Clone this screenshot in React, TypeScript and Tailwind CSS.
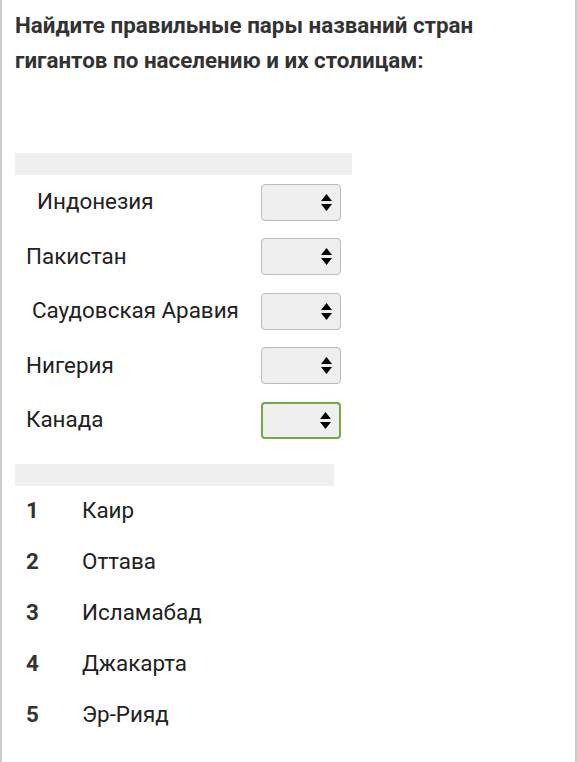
import React from "react";

const countries = [
  { name: "Индонезия", indent: "pl-[22px]" },
  { name: "Пакистан", indent: "pl-[11px]" },
  { name: "Саудовская Аравия", indent: "pl-[17px]" },
  { name: "Нигерия", indent: "pl-[11px]" },
  { name: "Канада", indent: "pl-[11px]" },
];

const capitals = ["Каир", "Оттава", "Исламабад", "Джакарта", "Эр-Рияд"];

function Arrows() {
  return (
    <svg width="11" height="17" viewBox="0 0 11 17" className="text-black">
      <path d="M5.5 0 L11 7 L0 7 Z" fill="currentColor" />
      <path d="M0 10 L11 10 L5.5 17 Z" fill="currentColor" />
    </svg>
  );
}

function FakeSelect({ active }: { active?: boolean }) {
  return (
    <div
      className={`w-[80px] h-[37px] rounded-[4px] bg-[#efefef] flex items-center justify-end pr-[8px] ${
        active ? "border-2 border-[#74a942]" : "border border-[#bcbcbc]"
      }`}
    >
      <Arrows />
    </div>
  );
}

export default function App() {
  return (
    <div
      className="min-h-[762px] bg-white border-x-2 border-[#cccccc] px-[13px] pt-[8px] text-[#222222]"
      style={{ fontFamily: "Roboto, 'Noto Sans', sans-serif" }}
    >
      <h1 className="text-[22.4px] leading-[35px] font-bold text-[#333333]">
        Найдите правильные пары названий стран
        <br />
        гигантов по населению и их столицам:
      </h1>

      <div className="mt-[75px] w-[337px] h-[22px] bg-[#efefef]" />

      <div className="w-[326px]">
        {countries.map((c, i) => (
          <div key={c.name} className="h-[54.5px] flex items-center justify-between">
            <span className={`text-[22.4px] ${c.indent}`}>{c.name}</span>
            <FakeSelect active={i === countries.length - 1} />
          </div>
        ))}
      </div>

      <div className="mt-[16px] w-[319px] h-[22px] bg-[#efefef]" />

      <div>
        {capitals.map((cap, i) => (
          <div key={cap} className="h-[51px] flex items-center text-[22.4px]">
            <span className="w-[67px] pl-[11px] font-bold text-[#333333]">{i + 1}</span>
            <span>{cap}</span>
          </div>
        ))}
      </div>
    </div>
  );
}
